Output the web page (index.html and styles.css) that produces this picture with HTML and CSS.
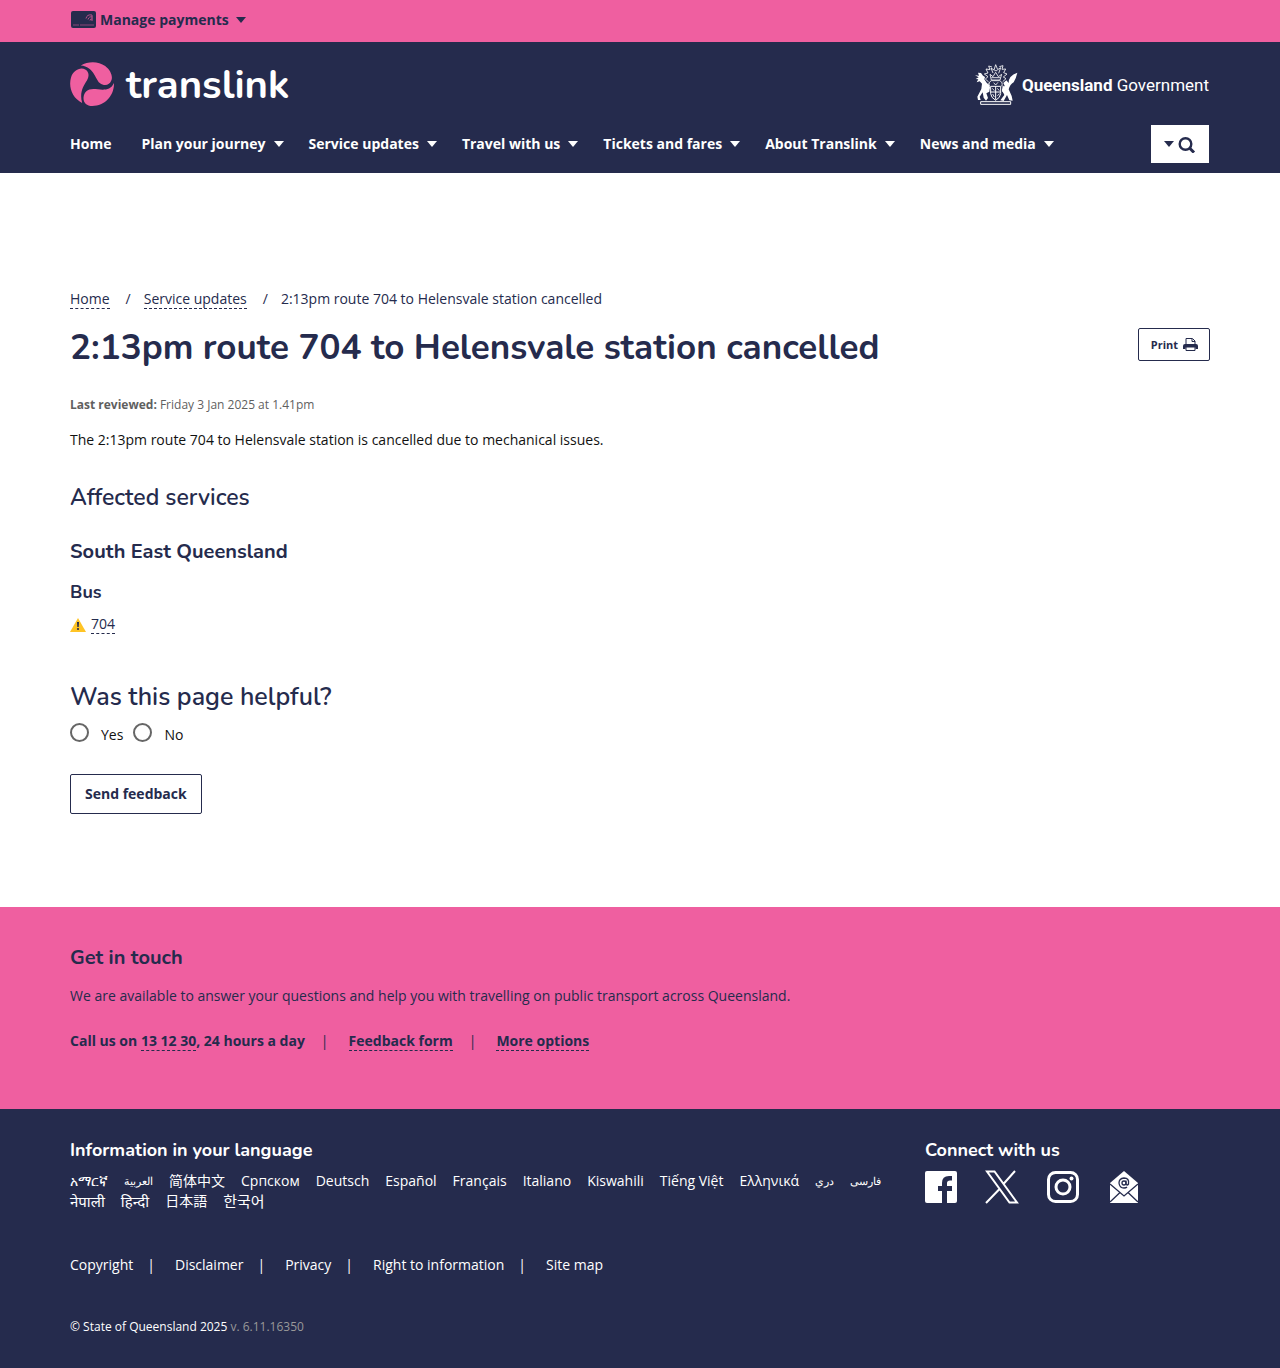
FILE: index.html
```html
<!DOCTYPE html>
<html lang="en">
<head>
<meta charset="utf-8">
<meta name="viewport" content="width=device-width, initial-scale=1">
<title>2:13pm route 704 to Helensvale station cancelled | Translink</title>
<link rel="stylesheet" href="styles.css">
</head>
<body>
<div class="topbar">
  <div class="container">
    <button class="payments" type="button">
      <svg class="card-icon" viewBox="0 0 26 18" aria-hidden="true"><rect x="1" width="25" height="17" rx="2" fill="#252b4d"/><path d="M3 14H9M10 14H24" stroke="#8e4479"/><path d="M16 7.500Q17 3 22 4M18 8.500Q19 5 22.500 6M20 9.500Q20 7.500 22.500 8M22 4V10" fill="none" stroke="#b9528a"/></svg>
      <span>Manage payments</span><span class="caret"></span>
    </button>
  </div>
</div>
<header class="header">
  <div class="container">
    <div class="brands">
      <a class="logo" href="#">
        <svg class="logo-mark" viewBox="0 0 130 130" aria-hidden="true"><g fill="#ef5fa0"><path d="M32 10C54-3 84-3 104 12C122 26 127 45 122 55C117 69 101 73 88 62C73 48 71 14 32 10Z"/><path d="M36 121C6 107-5 73 3 46C9 25 30 14 45 22C57 29 57 42 50 55C40 70 27 91 36 121Z"/><path d="M130 62C131 99 104 130 66 130C49 130 39 120 40 105C41 90 52 80 69 80C89 80 117 90 130 62Z"/></g></svg>
        <span class="wordmark">translink</span>
      </a>
      <a class="government" href="#">
        <svg class="crest" viewBox="0 0 132 126" aria-hidden="true" fill="none" stroke="#fff" stroke-width="3">
          <path d="M20 116H110V124H20ZM50 70H80V92Q79 104 65 112Q51 104 50 92ZM50 87H80M65 70V110"/>
          <path d="M47 70Q42 58 52 53H77Q88 58 83 70M52 51L48 34L57 41L65 28L73 41L83 34L78 51ZM57 30L51 15L60 21L65 5L71 20L80 14L74 31M44 57L34 48L42 41L31 33L42 30L36 18L48 20L44 9L54 12M86 56L96 47L88 42L99 33L89 29L95 18L84 19L87 8L76 11M59 59L65 66L72 58M55 76L61 83M70 76L76 83M56 93L61 102M70 98L77 92M61 23H70M52 44H79" stroke-width="2.500"/>
          <g fill="#fff" stroke="none"><path d="M21 30L27 38L33 42L31 49L38 59L48 72L46 86L37 91L42 105L36 113L29 104L26 88L17 101L20 111L12 111L10 101L22 78L24 62L17 55L8 58L13 49L5 48L14 43L3 37L15 38L12 29Z"/><path d="M130 29Q126 47 119 58Q108 64 104 79L113 99L116 113L106 112L99 96L89 114L79 112L91 96L84 80L92 68L88 60L97 52L104 60Q103 38 130 29Z"/><path d="M32 70L43 60L47 76L38 83ZM86 67L97 77L90 91L84 85Z"/></g>
        </svg>
        <span class="gov-name"><b>Queensland</b> Government</span>
      </a>
    </div>
    <nav class="nav" aria-label="Main">
      <ul class="nav-list">
        <li><a href="#">Home</a></li>
        <li><a href="#">Plan your journey<span class="caret"></span></a></li>
        <li><a href="#">Service updates<span class="caret"></span></a></li>
        <li><a href="#">Travel with us<span class="caret"></span></a></li>
        <li><a href="#">Tickets and fares<span class="caret"></span></a></li>
        <li><a href="#">About Translink<span class="caret"></span></a></li>
        <li><a href="#">News and media<span class="caret"></span></a></li>
      </ul>
      <button class="search" type="button" aria-label="Search"><span class="caret"></span><svg viewBox="0 0 18 18" width="18" height="18" aria-hidden="true" fill="none" stroke="#252b4d"><circle cx="7.500" cy="9" r="5.800" stroke-width="2.400"/><path d="M11.500 13L16 17.500" stroke-width="3"/></svg></button>
    </nav>
  </div>
</header>
<main class="container main">
  <nav aria-label="Breadcrumb">
    <ol class="crumbs">
      <li><a class="link" href="#">Home</a></li>
      <li><a class="link" href="#">Service updates</a></li>
      <li>2:13pm route 704 to Helensvale station cancelled</li>
    </ol>
  </nav>
  <div class="title-row">
    <h1>2:13pm route 704 to Helensvale station cancelled</h1>
    <button class="print" type="button">Print <svg viewBox="0 0 15 15" width="15" height="15" aria-hidden="true"><path d="M3 7V1.500H9.500L12 4V7M9 2V4.500H12" fill="none" stroke="#252b4d"/><path d="M2 7H13Q15 7 15 9V12H12.500V10.500H2.500V12H0V9Q0 7 2 7Z" fill="#252b4d"/><path d="M3 10V13.500H12V10" fill="none" stroke="#252b4d"/></svg></button>
  </div>
  <p class="reviewed"><b>Last reviewed:</b> Friday 3 Jan 2025 at 1.41pm</p>
  <p class="summary">The 2:13pm route 704 to Helensvale station is cancelled due to mechanical issues.</p>
  <h2 class="affected">Affected services</h2>
  <h3>South East Queensland</h3>
  <h4>Bus</h4>
  <p class="route"><svg viewBox="0 0 16 14" width="16" height="14" aria-hidden="true"><path d="M8 0L16 14H0Z" fill="#ffc425"/><path d="M7 4H9L8.700 9H7.300Z" fill="#252b4d"/><circle cx="8" cy="11" r="1.100" fill="#252b4d"/></svg><a class="link" href="#">704</a></p>
  <form class="feedback">
    <fieldset>
      <legend>Was this page helpful?</legend>
      <div class="choices">
        <label><input type="radio" name="helpful" value="yes"><span>Yes</span></label>
        <label><input type="radio" name="helpful" value="no"><span>No</span></label>
      </div>
    </fieldset>
    <button class="send" type="button">Send feedback</button>
  </form>
</main>
<section class="contact">
  <div class="container">
    <h2>Get in touch</h2>
    <p>We are available to answer your questions and help you with travelling on public transport across Queensland.</p>
    <ul class="contact-list">
      <li>Call us on <a class="link" href="#">13 12 30</a>, 24 hours a day</li>
      <li><a class="link" href="#">Feedback form</a></li>
      <li><a class="link" href="#">More options</a></li>
    </ul>
  </div>
</section>
<footer class="footer">
  <div class="container">
    <div class="footer-top">
      <section class="languages">
        <h2>Information in your language</h2>
        <ul class="language-list">
          <li><a href="#" lang="am">አማርኛ</a></li>
          <li><a href="#" lang="ar" class="arabic">العربية</a></li>
          <li><a href="#" lang="zh-Hans">简体中文</a></li>
          <li><a href="#" lang="sr">Српском</a></li>
          <li><a href="#" lang="de">Deutsch</a></li>
          <li><a href="#" lang="es">Español</a></li>
          <li><a href="#" lang="fr">Français</a></li>
          <li><a href="#" lang="it">Italiano</a></li>
          <li><a href="#" lang="sw">Kiswahili</a></li>
          <li><a href="#" lang="vi">Tiếng Việt</a></li>
          <li><a href="#" lang="el">Ελληνικά</a></li>
          <li><a href="#" lang="prs" class="arabic">دري</a></li>
          <li><a href="#" lang="fa" class="arabic">فارسی</a></li>
          <li><a href="#" lang="ne" class="large-script">नेपाली</a></li>
          <li><a href="#" lang="hi" class="large-script">हिन्दी</a></li>
          <li><a href="#" lang="ja">日本語</a></li>
          <li><a href="#" lang="ko" class="large-script">한국어</a></li>
        </ul>
      </section>
      <section class="connect">
        <h2>Connect with us</h2>
        <div class="social">
          <a href="#" aria-label="Facebook"><svg viewBox="0 0 34 34"><rect x="1" y="1" width="32" height="32" rx="2" fill="#fff"/><path d="M18 33V21H14V16H18V13Q18 6 25 6H28V10.500H26Q23 10.500 23 13V16H28V21H23V33Z" fill="#252b4d"/></svg></a>
          <a href="#" aria-label="X"><svg viewBox="0 0 34 34" fill="none" stroke="#fff" stroke-width="2"><path d="M2 1.500H9.500L32 32.500H24.500ZM30 1L18 14.500M15 18.500L1 33"/></svg></a>
          <a href="#" aria-label="Instagram"><svg viewBox="0 0 34 34" fill="none" stroke="#fff" stroke-width="3"><rect x="2.500" y="2.500" width="29" height="29" rx="7"/><circle cx="17" cy="17" r="7"/><circle cx="25.500" cy="8.500" r="2" fill="#fff" stroke="none"/></svg></a>
          <a href="#" aria-label="Email newsletter"><svg viewBox="0 0 34 34"><path d="M17 1L31 13V33H3V13Z" fill="#fff"/><path d="M3 14L17 26L31 14M3 32L13 22.500M31 32L21 22.500" fill="none" stroke="#252b4d" stroke-width="1.300"/><circle cx="17" cy="13" r="2" fill="none" stroke="#252b4d" stroke-width="1.300"/><path d="M19 10.500V14Q20 16 21.500 14Q22.500 8 17 8Q12 8.500 12 13Q12.500 18 17 18Q19 18 20 17" fill="none" stroke="#252b4d" stroke-width="1.300"/></svg></a>
        </div>
      </section>
    </div>
    <ul class="legal">
      <li><a href="#">Copyright</a></li>
      <li><a href="#">Disclaimer</a></li>
      <li><a href="#">Privacy</a></li>
      <li><a href="#">Right to information</a></li>
      <li><a href="#">Site map</a></li>
    </ul>
    <p class="copyright">© State of Queensland 2025 <span>v. 6.11.16350</span></p>
  </div>
</footer>
</body>
</html>
```
FILE: styles.css
```css
:root {
  --navy: #252b4d;
  --pink: #ef5fa0;
  --heading: Nunito, Lato, sans-serif;
}
* { box-sizing: border-box; }
body {
  margin: 0;
  background: #fff;
  color: var(--navy);
  font: 14px/20px "Open Sans", "Noto Sans", "Noto Sans CJK SC", sans-serif;
}
h1, h2, h3, h4, p, ul, ol { margin: 0; padding: 0; }
ul, ol { list-style: none; }
h1, h2, h3, h4, legend { font-family: var(--heading); font-weight: 700; }
button { font: inherit; color: inherit; cursor: pointer; }
a { color: inherit; text-decoration: none; }
.container { max-width: 1180px; margin: 0 auto; padding: 0 20px; }
.link { display: inline-block; line-height: 18px; border-bottom: 1px dashed; }
.caret {
  display: inline-block;
  border: 5px solid transparent;
  border-top: 6px solid currentColor;
  border-bottom: 0;
}

.topbar { background: var(--pink); height: 42px; }
.payments {
  display: flex;
  align-items: center;
  gap: 4px;
  padding: 10px 0;
  border: 0;
  background: none;
  font-weight: 700;
}
.payments .caret { margin-left: 3px; }
.card-icon { width: 26px; height: 18px; }

.header { background: var(--navy); color: #fff; padding: 20px 0 10px; }
.brands { display: flex; justify-content: space-between; align-items: center; height: 44px; }
.logo { display: flex; align-items: center; gap: 12px; }
.logo-mark { width: 44px; height: 44px; }
.wordmark { padding-top: 2px; font: 700 40px/44px var(--heading); }
.government { display: flex; align-items: center; gap: 4px; padding-right: 1px; }
.crest { width: 44px; height: 42px; }
.gov-name { padding-top: 2px; font: 400 17px/24px Roboto, sans-serif; }
.gov-name b { font-weight: 700; }
.nav { display: flex; align-items: center; justify-content: space-between; margin-top: 19px; }
.nav-list { display: flex; gap: 25px; font-weight: 700; }
.nav-list li:first-child { margin-right: 5px; }
.nav-list a { display: flex; align-items: center; gap: 8px; }
.search {
  display: flex;
  align-items: center;
  justify-content: center;
  gap: 4px;
  width: 58px;
  height: 38px;
  margin-right: 1px;
  padding: 0;
  border: 0;
  background: #fff;
  color: var(--navy);
}

.main { padding-top: 116px; padding-bottom: 93px; }
.crumbs { display: flex; flex-wrap: wrap; }
.crumbs li + li::before { content: "/"; padding: 0 13px 0 16px; }
.title-row { display: flex; justify-content: space-between; align-items: flex-start; margin-top: 16px; }
h1 { font-size: 35px; line-height: 46px; }
.print {
  display: flex;
  align-items: center;
  gap: 5px;
  height: 33px;
  margin-top: 3px;
  padding: 0 11px 0 12px;
  border: 1px solid var(--navy);
  border-radius: 2px;
  background: #fff;
  font-size: 11px;
  font-weight: 700;
}
.reviewed { margin-top: 24px; font-size: 12px; color: #5f5f5f; }
.reviewed b { font-weight: 700; }
.summary { margin-top: 15px; color: #111; }
.affected { margin-top: 33px; font-size: 23px; line-height: 30px; font-weight: 600; }
h3 { margin-top: 26px; font-size: 20px; line-height: 26px; }
h4 { margin-top: 15px; font-size: 18px; line-height: 24px; }
.route { display: flex; align-items: center; gap: 5px; margin-top: 11px; }
.feedback { margin-top: 45px; }
fieldset { margin: 0; padding: 0; border: 0; }
legend { padding: 0; font-size: 25px; line-height: 36px; font-weight: 600; }
.choices { display: flex; gap: 10px; margin-top: 8px; color: #111; }
.choices label { display: flex; gap: 12px; }
.choices span { padding-top: 2px; }
.choices input {
  appearance: none;
  width: 19px;
  height: 19px;
  margin: 0;
  border: 2px solid #666;
  border-radius: 50%;
}
.choices input:checked { background: var(--navy); box-shadow: inset 0 0 0 3px #fff; }
.send {
  height: 40px;
  margin-top: 29px;
  padding: 0 14px;
  border: 1px solid var(--navy);
  border-radius: 2px;
  background: #fff;
  font-weight: 700;
}

.contact { background: var(--pink); padding: 38px 0 58px; }
.contact h2 { font-size: 20px; line-height: 26px; }
.contact p { margin-top: 15px; }
.contact-list { display: flex; flex-wrap: wrap; margin-top: 25px; font-weight: 700; }
.contact-list li + li::before { content: "|"; padding: 0 20px 0 16px; font-weight: 400; }

.footer { background: var(--navy); color: #fff; padding: 28px 0 32px; }
.footer h2 { font-size: 18px; line-height: 26px; }
.footer-top { display: grid; grid-template-columns: 3fr 1fr; }
.languages { padding-right: 15px; }
.language-list { display: flex; flex-wrap: wrap; column-gap: 16px; margin-top: 8px; }
.language-list a { display: block; height: 20px; line-height: 20px; }
.language-list .arabic { font-size: 11px; }
.language-list .large-script { font-size: 15px; }
.social { display: flex; gap: 27px; margin: 7px 0 0 -1px; }
.social svg { display: block; width: 34px; height: 34px; }
.legal { display: flex; flex-wrap: wrap; margin-top: 44px; }
.legal li + li::before { content: "|"; padding: 0 20px 0 14px; }
.copyright { margin-top: 42px; font-size: 12px; }
.copyright span { color: #999; }
```
